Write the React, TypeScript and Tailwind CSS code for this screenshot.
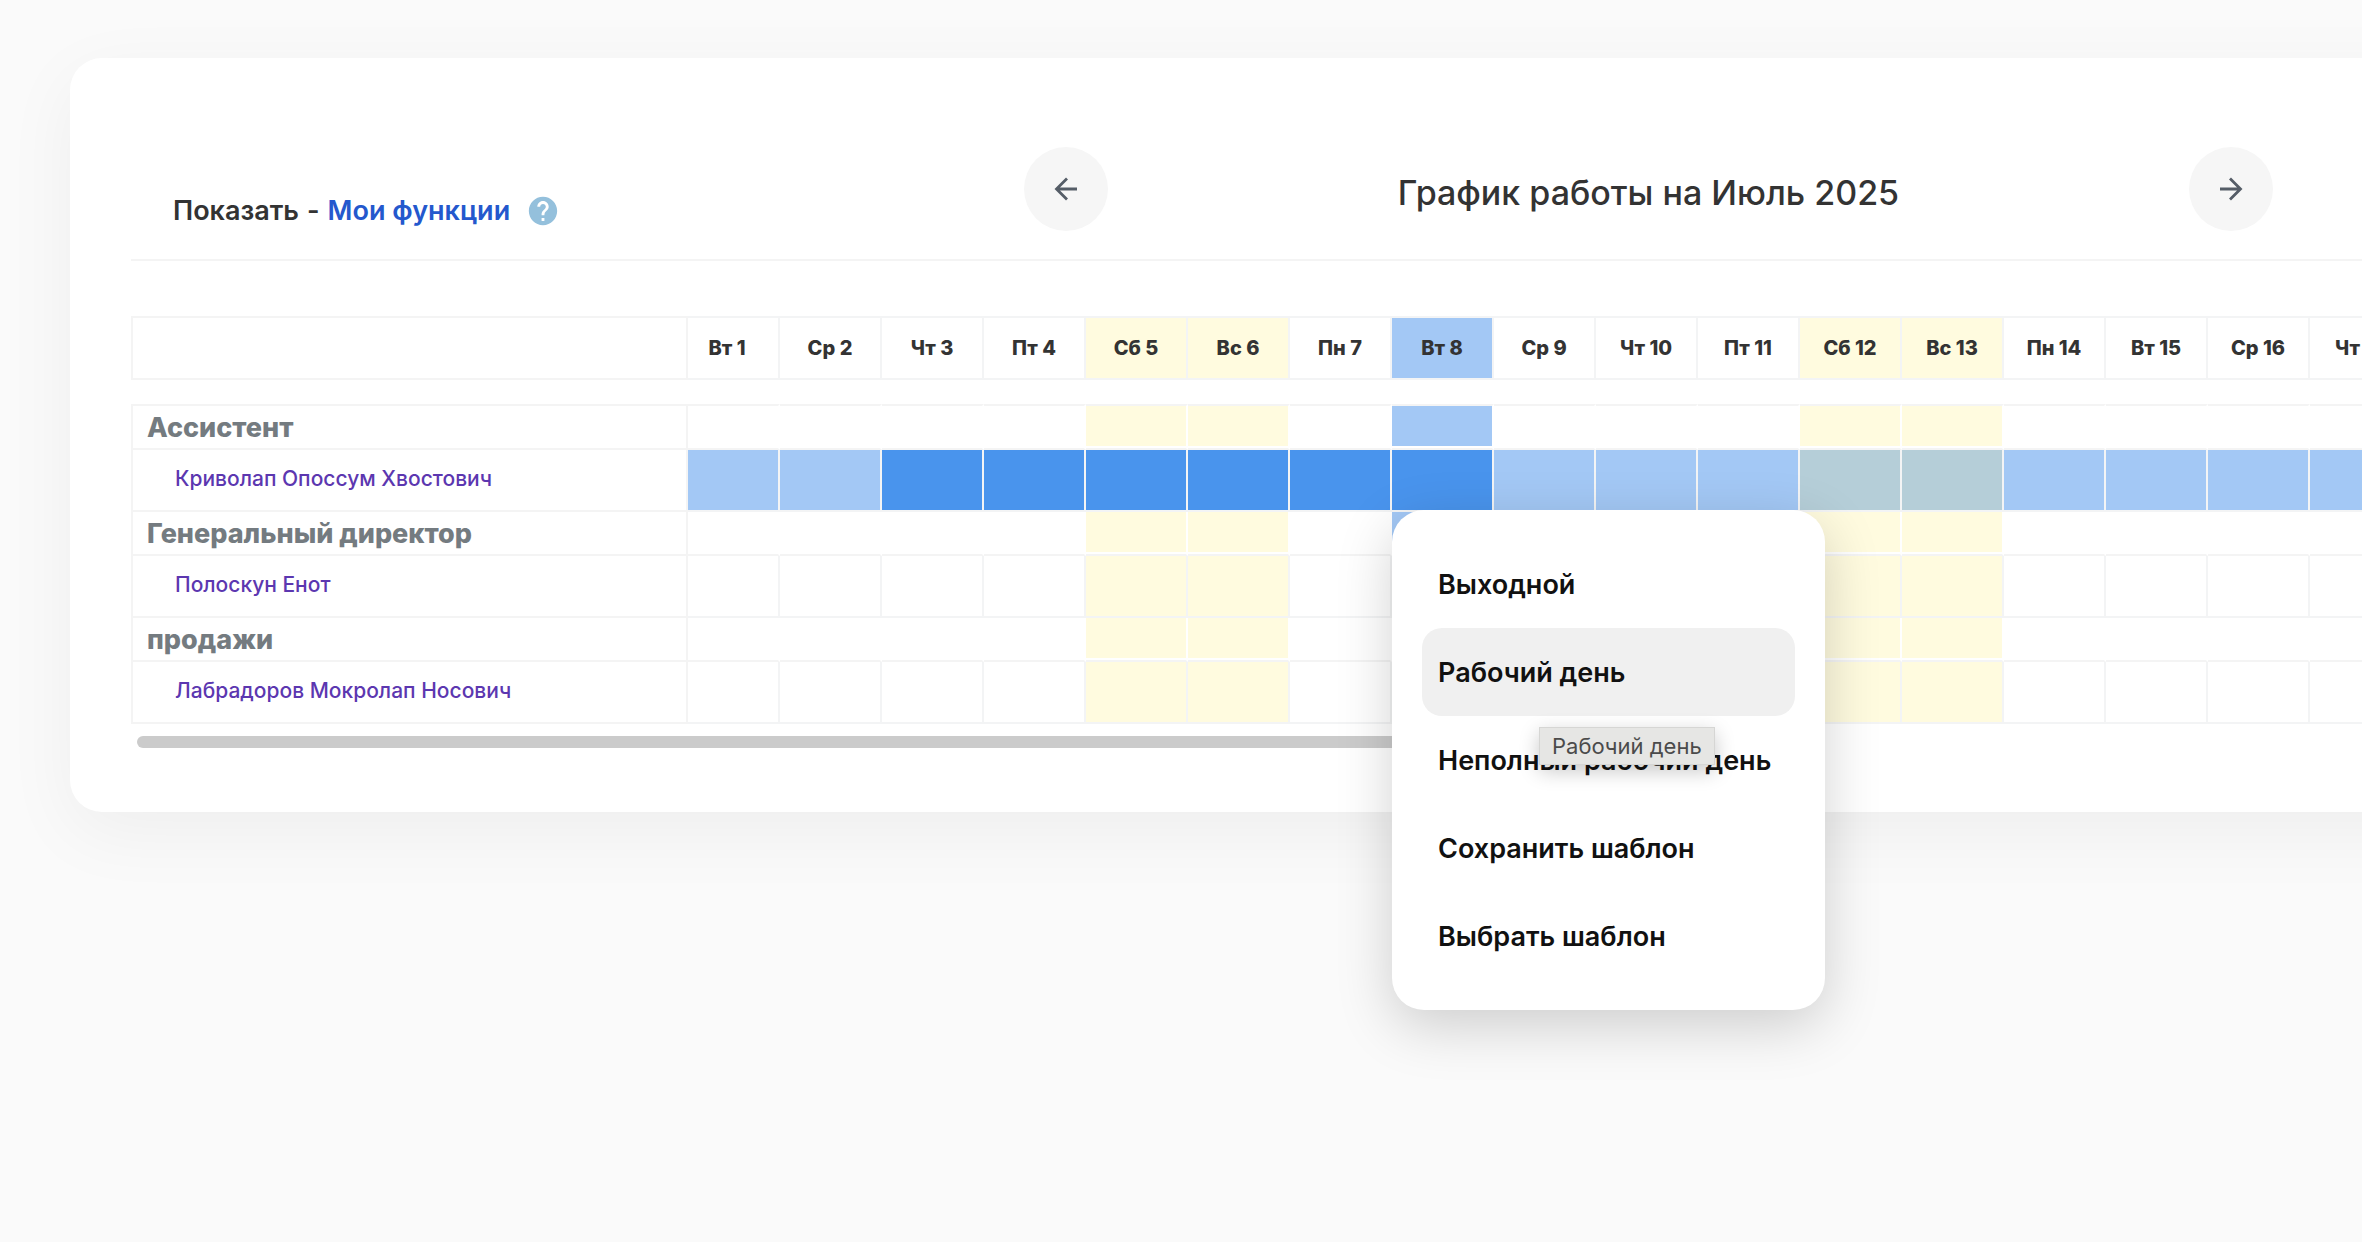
import { MdHelp } from 'react-icons/md';

const WEEKDAYS = ['Пн', 'Вт', 'Ср', 'Чт', 'Пт', 'Сб', 'Вс'];
const TODAY = 8;

// July 2025 starts on a Tuesday
const DAYS = Array.from({ length: 31 }, (_, i) => {
  const weekday = (i + 1) % 7;
  return { day: i + 1, name: WEEKDAYS[weekday], weekend: weekday > 4 };
});

type Day = (typeof DAYS)[number];

const GROUPS = [
  { title: 'Ассистент', person: 'Криволап Опоссум Хвостович', scheduled: true },
  { title: 'Генеральный директор', person: 'Полоскун Енот', scheduled: false },
  { title: 'продажи', person: 'Лабрадоров Мокролап Носович', scheduled: false },
];

const MENU = ['Выходной', 'Рабочий день', 'Неполный рабочий день', 'Сохранить шаблон', 'Выбрать шаблон'];
const ACTIVE = 'Рабочий день';

function dayTint(d: Day) {
  if (d.day === TODAY) return 'bg-[#a3c8f5]';
  return d.weekend ? 'bg-[#fffbdf]' : 'bg-white';
}

function shiftTint(d: Day, scheduled: boolean) {
  if (!scheduled) return d.weekend ? 'bg-[#fffbdf]' : 'bg-white';
  if (d.day >= 3 && d.day <= 8) return 'bg-[#4994ed]';
  return d.weekend ? 'bg-[#b5ced8]' : 'bg-[#a3c8f5]';
}

function RoundButton({ label, path }: { label: string; path: string }) {
  return (
    <button
      type="button"
      aria-label={label}
      className="flex size-[84px] shrink-0 items-center justify-center rounded-full bg-[#f6f6f6] text-[#555d67]"
    >
      <svg viewBox="0 0 24 24" className="size-6" fill="none" stroke="currentColor" strokeWidth="2.8">
        <path d={path} />
      </svg>
    </button>
  );
}

function Header() {
  return (
    <header className="flex h-[114px] items-start border-b-2 border-[#f4f4f4]">
      <div className="flex w-[893px] shrink-0 items-center gap-2 pt-[47px] pl-[42px] text-[27px] leading-8 font-semibold">
        <span>Показать</span>
        <span>-</span>
        <a href="#functions" className="text-[#2458cd]">
          Мои функции
        </a>
        <button type="button" aria-label="Справка" className="ml-2 text-[#94c0dc]">
          <MdHelp className="size-[34px]" />
        </button>
      </div>
      <nav aria-label="Месяц" className="mr-[178px] flex flex-1 items-center justify-between">
        <RoundButton label="Предыдущий месяц" path="M23 12H2.5M13 1.5 2.5 12 13 22.5" />
        <h1 className="pt-2 text-[34px] leading-10 font-medium">График работы на Июль 2025</h1>
        <RoundButton label="Следующий месяц" path="M1 12h20.5M11 1.5 21.5 12 11 22.5" />
      </nav>
    </header>
  );
}

function Schedule() {
  return (
    <table className="w-[3709px] table-fixed border-separate border-spacing-0 text-left">
      <colgroup>
        <col className="w-[557px]" />
        {DAYS.map((d) => (
          <col key={d.day} className={d.day === 1 ? 'w-[92px]' : 'w-[102px]'} />
        ))}
      </colgroup>
      <thead>
        <tr className="h-16">
          <td className="border-2 border-[#f4f4f4]" />
          {DAYS.map((d) => (
            <th
              key={d.day}
              scope="col"
              className={`border-y-2 border-r-2 border-[#f3f4f5] p-0 text-center text-[20px] leading-6 font-extrabold ${
                d.day === 1 ? 'pr-3' : ''
              } ${dayTint(d)}`}
            >
              {d.name} {d.day}
            </th>
          ))}
        </tr>
        <tr className="h-6" aria-hidden="true">
          <td colSpan={32} />
        </tr>
      </thead>
      {GROUPS.map((g, i) => (
        <tbody key={g.title}>
          <tr className={i === 0 ? 'h-[46px]' : 'h-11'}>
            <th
              scope="rowgroup"
              className={`border-x-2 border-b-2 border-[#f4f4f4] p-0 pt-0.5 pl-3.5 text-[27px] leading-10 font-extrabold text-[#747b80] ${
                i === 0 ? 'border-t-2' : ''
              }`}
            >
              {g.title}
            </th>
            {DAYS.map((d) => (
              <td
                key={d.day}
                className={`border-r-2 border-b-2 border-[#f4f4f4] border-r-white p-0 align-top ${i === 0 ? 'border-t-2' : ''}`}
              >
                <div className={`h-10 ${dayTint(d)}`} />
              </td>
            ))}
          </tr>
          <tr className="h-[62px]">
            <th
              scope="row"
              className="border-x-2 border-b-2 border-[#f4f4f4] p-0 pb-0.5 pl-[42px] text-[21px] leading-7 font-medium text-[#5c37b0]"
            >
              <a href="#person">{g.person}</a>
            </th>
            {DAYS.map((d) => (
              <td key={d.day} className={`border-r-2 border-b-2 border-[#f3f4f5] p-0 ${shiftTint(d, g.scheduled)}`} />
            ))}
          </tr>
        </tbody>
      ))}
    </table>
  );
}

function ShiftMenu() {
  return (
    <div
      role="menu"
      className="absolute top-[194px] left-[1261px] flex w-[433px] flex-col rounded-[32px] bg-white p-[30px] shadow-[0_16px_56px_rgba(0,0,0,0.18)]"
    >
      {MENU.map((item) => (
        <div key={item} className="relative">
          <button
            type="button"
            role="menuitem"
            className={`h-[88px] w-full rounded-[20px] px-4 pt-0.5 text-left text-[27px] leading-8 font-semibold whitespace-nowrap text-[#111] ${
              item === ACTIVE ? 'bg-[#f0f0f0]' : ''
            }`}
          >
            {item}
          </button>
          {item === ACTIVE && (
            <div
              role="tooltip"
              className="absolute top-[99px] left-[117px] z-10 border border-[#d6d6d4] bg-[#e6e6e4] px-3 text-[22px] leading-9 whitespace-nowrap text-[#4b4b4b] shadow-[0_6px_20px_rgba(0,0,0,0.22)]"
            >
              {item}
            </div>
          )}
        </div>
      ))}
    </div>
  );
}

export default function App() {
  return (
    <div className="min-h-screen overflow-hidden bg-[#fafafa] pt-[58px] font-['Inter','Noto_Sans',sans-serif] text-[#333]">
      <main className="-mr-[150px] ml-[70px] rounded-[32px] bg-white px-[61px] pt-[89px] pb-16 shadow-[0_20px_72px_rgba(0,0,0,0.05)]">
        <Header />
        <section aria-label="График" className="relative mt-[55px]">
          <div className="overflow-hidden">
            <Schedule />
          </div>
          <div className="mt-3 ml-[6px] h-3 w-3/5 rounded-full bg-[#cbcbcb]" />
          <ShiftMenu />
        </section>
      </main>
    </div>
  );
}
